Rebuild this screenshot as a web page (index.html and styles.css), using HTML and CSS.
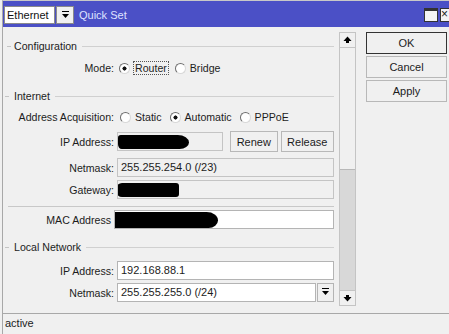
FILE: index.html
```html
<!DOCTYPE html>
<html lang="en">
<head>
  <meta charset="UTF-8">
  <title>Quick Set</title>
  <link rel="stylesheet" href="styles.css">
</head>
<body>
  <div class="window">
    <div class="titlebar">
      <div class="iface">Ethernet</div>
      <div class="drop">
        <svg width="9" height="9" viewBox="0 0 9 9"><rect x="1" y="0" width="7" height="1" fill="#000"/><path d="M1 3h7l-3.5 4z" fill="#000"/></svg>
      </div>
      <span class="title">Quick Set</span>
      <div class="win-btn max"></div>
      <div class="win-btn close">×</div>
    </div>

    <div class="main">
      <div class="panel">
        <div class="legend"><span>Configuration</span></div>
        <div class="row mode-row">
          <label>Mode:</label>
          <div class="options">
            <span class="radio checked"></span><span class="focus">Router</span>
            <span class="radio"></span><span>Bridge</span>
          </div>
        </div>

        <div class="legend internet"><span>Internet</span></div>
        <div class="row acq-row">
          <label>Address Acquisition:</label>
          <div class="options">
            <span class="radio"></span><span class="opt">Static</span>
            <span class="radio checked"></span><span class="opt">Automatic</span>
            <span class="radio"></span><span>PPPoE</span>
          </div>
        </div>
        <div class="row ip-row">
          <label>IP Address:</label>
          <div class="field off short"><span class="blot blot-ip"></span></div>
          <button class="btn renew">Renew</button>
          <button class="btn release">Release</button>
        </div>
        <div class="row">
          <label>Netmask:</label>
          <div class="field off">255.255.254.0 (/23)</div>
        </div>
        <div class="row tight">
          <label>Gateway:</label>
          <div class="field off"><span class="blot blot-gw"></span></div>
        </div>
        <div class="sep"></div>
        <div class="row tight">
          <label class="mac">MAC Address</label>
          <div class="field"><span class="blot blot-mac"></span></div>
        </div>

        <div class="legend local"><span>Local Network</span></div>
        <div class="row lan-ip">
          <label>IP Address:</label>
          <div class="field">192.168.88.1</div>
        </div>
        <div class="row tight">
          <label>Netmask:</label>
          <div class="field">255.255.255.0 (/24)</div>
          <div class="field-drop">
            <svg width="9" height="9" viewBox="0 0 9 9"><rect x="1" y="0" width="7" height="1" fill="#000"/><path d="M1 3h7l-3.5 4z" fill="#000"/></svg>
          </div>
        </div>
      </div>

      <div class="scroll">
        <div class="arrow">
          <svg width="9" height="8" viewBox="0 0 9 8"><path d="M0.5 5h8l-4-4.5z" fill="#000"/><rect x="3" y="5" width="3" height="2" fill="#000"/></svg>
        </div>
        <div class="thumb"></div>
        <div class="track"></div>
        <div class="arrow">
          <svg width="9" height="8" viewBox="0 0 9 8"><rect x="3" y="1" width="3" height="2" fill="#000"/><path d="M0.5 3h8l-4 4.5z" fill="#000"/></svg>
        </div>
      </div>

      <div class="actions">
        <button class="btn big ok">OK</button>
        <button class="btn big">Cancel</button>
        <button class="btn big">Apply</button>
      </div>
    </div>

    <div class="status">active</div>
  </div>
</body>
</html>
```

FILE: styles.css
```css
body {
  margin: 0;
  background-color: #f0f0f0;
  font-family: "Liberation Sans", Arial, sans-serif;
  font-size: 10.6px;
  color: #1c1c1c;
  width: 449px;
  height: 334px;
  overflow: hidden;
}
.window {
  margin-left: 2px;
  border-left: 1px solid #a8a8a8;
  border-top: 1px solid #c8c8c8;
  height: 333px;
  display: flex;
  flex-direction: column;
}

/* title bar */
.titlebar {
  height: 26px;
  background-color: #4b50c6;
  display: flex;
  align-items: center;
  padding-top: 2px;
  box-sizing: border-box;
}
.iface {
  margin-left: 1px;
  width: 47px;
  height: 16px;
  line-height: 16px;
  padding-left: 2px;
  background-color: #fff;
  border: 1px solid #8a8a8a;
  color: #111;
  font-size: 11px;
}
.drop {
  margin-left: 1px;
  width: 16px;
  height: 16px;
  background-color: #f0f0f0;
  border: 1px solid #8a8a8a;
  display: flex;
  align-items: center;
  justify-content: center;
}
.title {
  margin-left: 5px;
  color: #dfe2ff;
  font-size: 11px;
  flex: 1;
}
.win-btn {
  width: 12px;
  height: 12px;
  border: 1px solid #333;
  background-color: #f4f4f4;
}
.max {
  margin-right: 2px;
  box-shadow: inset 0 2px 0 #333;
}
.close {
  width: 8px;
  border-right: none;
  font-size: 12px;
  line-height: 11px;
  text-align: left;
  color: #222;
  overflow: hidden;
}

/* main area */
.main {
  display: flex;
  height: 286px;
}
.panel {
  width: 336px;
  padding: 12px 5px 0 0;
  box-sizing: border-box;
}
.legend {
  height: 14px;
  display: flex;
  align-items: center;
}
.legend::before {
  content: "";
  width: 4px;
  height: 1px;
  margin-left: 4px;
  background-color: #c4c4c4;
}
.legend span {
  margin-left: 3px;
  margin-right: 5px;
}
.legend::after {
  content: "";
  flex: 1;
  height: 1px;
  background-color: #d0d0d0;
}
.legend.internet {
  margin-top: 12px;
}
.legend.internet::before,
.legend.local::before {
  margin-left: 2px;
  width: 4px;
}
.legend.internet span,
.legend.local span {
  margin-left: 5px;
}
.legend.local {
  margin-top: 11px;
}

.row {
  display: flex;
  align-items: center;
  height: 19px;
  margin-top: 6px;
}
.row.tight {
  margin-top: 3px;
}
.row label {
  width: 111px;
  text-align: right;
  margin-right: 3px;
  flex-shrink: 0;
}
.row label.mac {
  margin-right: 0;
  width: 108px;
}
.mode-row {
  height: 18px;
  margin-top: 6px;
}
.acq-row {
  height: 18px;
  margin-top: 5px;
}
.ip-row {
  height: 21px;
  margin-top: 5px;
}
.lan-ip {
  margin-top: 7px;
}
.options {
  display: flex;
  align-items: center;
}
.radio {
  width: 9px;
  height: 9px;
  border-radius: 50%;
  background-color: #fff;
  border: 1px solid;
  border-color: #6e6e6e #d8d8d8 #d8d8d8 #6e6e6e;
  margin-right: 4px;
  margin-left: 1px;
}
.radio.checked {
  background: radial-gradient(circle, #111 0 1.8px, #fff 2.3px);
}
.focus {
  border: 1px dotted #555;
  padding: 0 1px;
  margin-left: -1px;
  margin-right: 5px;
}
.opt {
  margin-right: 7px;
}
.acq-row .radio:first-child {
  margin-left: 3px;
}
.mode-row .radio:first-child {
  margin-left: 2px;
}

.field {
  flex: 1;
  height: 17px;
  line-height: 17px;
  border: 1px solid #b4b4b4;
  background-color: #fff;
  padding-left: 3px;
  overflow: hidden;
  white-space: nowrap;
  font-size: 11px;
}
.field.off {
  background-color: #f0f0f0;
  border-color: #c4c4c4;
}
.field.short {
  flex: none;
  width: 101px;
}
.blot {
  display: inline-block;
  background-color: #000;
  vertical-align: middle;
}
.blot-ip {
  width: 71px;
  height: 14px;
  margin-left: -3px;
  border-radius: 3px 12px 10px 4px / 3px 8px 7px 5px;
}
.blot-gw {
  width: 63px;
  height: 14px;
  margin-left: -5px;
  border-radius: 6px 3px 3px 6px;
}
.blot-mac {
  width: 109px;
  height: 16px;
  margin-left: -9px;
  border-radius: 8px 12px 10px 6px / 6px 9px 8px 6px;
}
.row .mac + .field {
  margin-left: 3px;
}
.field-drop {
  width: 15px;
  height: 17px;
  margin-left: 1px;
  border: 1px solid #b4b4b4;
  background-color: #f0f0f0;
  display: flex;
  align-items: center;
  justify-content: center;
}
.sep {
  height: 1px;
  margin: 7px 0 0 5px;
  background-color: #c8c8c8;
}

.btn {
  font-family: inherit;
  font-size: 11px;
  color: #1c1c1c;
  background-color: #f0f0f0;
  border: 1px solid #b8b8b8;
  padding: 0;
  height: 21px;
}
.renew {
  width: 48px;
  margin-left: 7px;
}
.release {
  width: 54px;
  margin-left: 3px;
}

/* scrollbar */
.scroll {
  width: 15px;
  margin-top: 5px;
  height: 272px;
  border: 1px solid #c4c4c4;
  display: flex;
  flex-direction: column;
}
.arrow {
  height: 14px;
  background-color: #f0f0f0;
  display: flex;
  align-items: center;
  justify-content: center;
}
.arrow:first-child {
  border-bottom: 1px solid #c4c4c4;
}
.arrow:last-child {
  border-top: 1px solid #c4c4c4;
}
.thumb {
  height: 121px;
  background-color: #f0f0f0;
  border-bottom: 1px solid #b8b8b8;
}
.track {
  flex: 1;
  background-color: #d8d8d8;
}

/* right buttons */
.actions {
  margin-left: 10px;
  padding-top: 5px;
  display: flex;
  flex-direction: column;
  gap: 2px;
}
.btn.big {
  width: 81px;
  height: 22px;
  font-size: 11px;
}
.btn.ok {
  border-color: #333;
  height: 22px;
}

.status {
  border-top: 1px solid #a8a8a8;
  height: 20px;
  line-height: 19px;
  padding-left: 2px;
  font-size: 11px;
}
```
